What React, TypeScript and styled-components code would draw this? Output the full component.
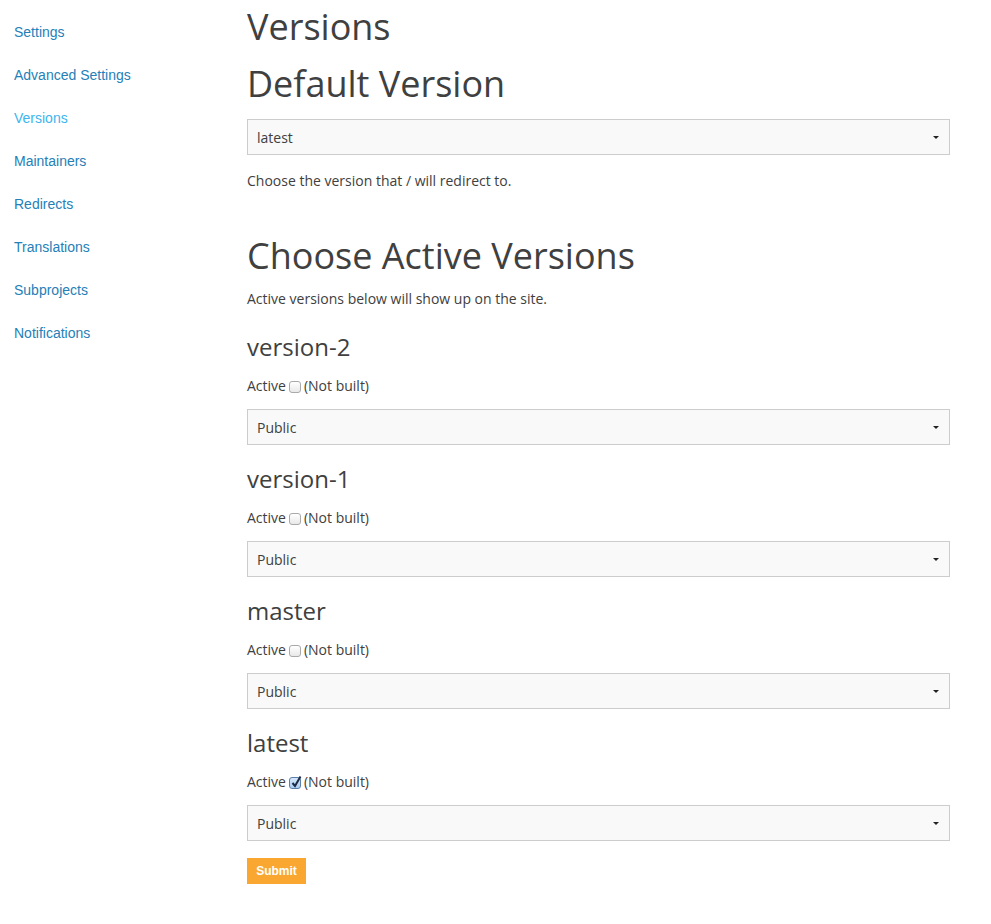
import React from "react";
import styled, { createGlobalStyle } from "styled-components";

const GlobalStyle = createGlobalStyle`
    html, body {
        margin: 0;
        padding: 0;
        background: #ffffff;
    }

    body {
        font-family: "Open Sans", "Liberation Sans", sans-serif;
        color: #404040;
    }
`;

const Page = styled.div`
    display: flex;
    align-items: flex-start;
    width: 991px;
`;

const Sidebar = styled.nav`
    width: 233px;
    padding: 22px 0 0 14px;
    display: flex;
    flex-direction: column;
    gap: 23px;
`;

const NavLink = styled.a<{ $active?: boolean }>`
    font-family: "Liberation Sans", Arial, sans-serif;
    font-size: 14px;
    line-height: 20px;
    color: ${(p) => (p.$active ? "#3db5ef" : "#2580b8")};
    text-decoration: none;
    cursor: pointer;
`;

const Main = styled.main`
    width: 703px;
    display: flex;
    flex-direction: column;
    padding-bottom: 40px;
`;

const Title = styled.h1<{ $top: number }>`
    font-size: 36px;
    font-weight: 400;
    line-height: 40px;
    margin: ${(p) => p.$top}px 0 0;
    color: #404040;
`;

const VersionName = styled.h3<{ $top: number }>`
    font-size: 24px;
    font-weight: 400;
    line-height: 26px;
    margin: ${(p) => p.$top}px 0 0;
    color: #404040;
`;

const Help = styled.p<{ $top: number }>`
    font-size: 14px;
    line-height: 20px;
    margin: ${(p) => p.$top}px 0 0;
`;

const SelectBox = styled.div<{ $top: number }>`
    margin-top: ${(p) => p.$top}px;
    height: 36px;
    box-sizing: border-box;
    border: 1px solid #cccccc;
    background: #f9f9f9;
    display: flex;
    align-items: center;
    justify-content: space-between;
    padding: 0 10px 0 9px;
    font-size: 14px;
    color: #404040;
`;

const Caret = styled.span`
    width: 0;
    height: 0;
    border-left: 3px solid transparent;
    border-right: 3px solid transparent;
    border-top: 3px solid #222222;
    margin-top: 1px;
`;

const ActiveRow = styled.label`
    margin-top: 16px;
    display: flex;
    align-items: center;
    gap: 3px;
    font-size: 14px;
    line-height: 20px;
`;

const Check = styled.span<{ $checked?: boolean }>`
    width: 12px;
    height: 12px;
    box-sizing: border-box;
    border: 1px solid ${(p) => (p.$checked ? "#5a7fa8" : "#a9a9a9")};
    border-radius: 3px;
    background: ${(p) =>
        p.$checked ? "linear-gradient(#d6e8fb, #a9cdf2)" : "linear-gradient(#ffffff, #e9e9e9)"};
    position: relative;
    margin: 1px 0 0 0;

    svg {
        position: absolute;
        left: 0;
        top: -3px;
    }
`;

const SubmitButton = styled.button`
    margin-top: 17px;
    align-self: flex-start;
    height: 26px;
    width: 59px;
    border: none;
    background: #f9a731;
    color: #ffffff;
    font-family: "Liberation Sans", Arial, sans-serif;
    font-weight: 700;
    font-size: 12px;
    padding: 0;
    cursor: pointer;
`;

const navItems = [
    "Settings",
    "Advanced Settings",
    "Versions",
    "Maintainers",
    "Redirects",
    "Translations",
    "Subprojects",
    "Notifications",
];

const versions = [
    { name: "version-2", active: false },
    { name: "version-1", active: false },
    { name: "master", active: false },
    { name: "latest", active: true },
];

const Select = ({ value, top }: { value: string; top: number }) => (
    <SelectBox $top={top}>
        <span>{value}</span>
        <Caret />
    </SelectBox>
);

const CheckMark = () => (
    <svg width="12" height="14" viewBox="0 0 12 14">
        <path d="M2.5 8 L5 11 L10.5 1.5" fill="none" stroke="#1d2a44" strokeWidth="2" />
    </svg>
);

const App = () => (
    <Page>
        <GlobalStyle />
        <Sidebar>
            {navItems.map((item) => (
                <NavLink key={item} $active={item === "Versions"}>
                    {item}
                </NavLink>
            ))}
        </Sidebar>
        <Main>
            <Title $top={7}>Versions</Title>
            <Title $top={17}>Default Version</Title>
            <Select value="latest" top={15} />
            <Help $top={16}>Choose the version that / will redirect to.</Help>

            <Title $top={45}>Choose Active Versions</Title>
            <Help $top={13}>Active versions below will show up on the site.</Help>

            {versions.map((v, i) => (
                <React.Fragment key={v.name}>
                    <VersionName $top={i === 0 ? 25 : 21}>{v.name}</VersionName>
                    <ActiveRow>
                        Active
                        <Check $checked={v.active}>{v.active && <CheckMark />}</Check>
                        (Not built)
                    </ActiveRow>
                    <Select value="Public" top={13} />
                </React.Fragment>
            ))}

            <SubmitButton>Submit</SubmitButton>
        </Main>
    </Page>
);

export default App;
